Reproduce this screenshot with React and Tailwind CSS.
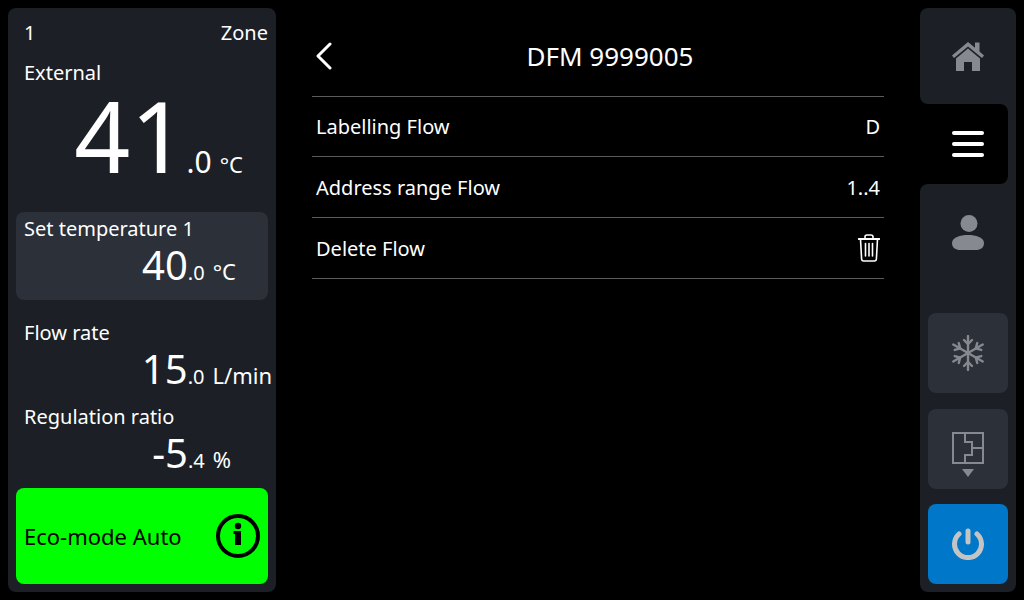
const font = { fontFamily: '"Noto Sans", sans-serif' };

const rows = [
  { label: "Labelling Flow", value: "D", h: "h-[60px]", text: "" },
  { label: "Address range Flow", value: "1..4", h: "h-[61px]", text: "pt-[2px]" },
  { label: "Delete Flow", trash: true, h: "h-[61px]", text: "pt-[2px]" },
];

const HomeIcon = () => (
  <svg width="32" height="30" viewBox="0 0 32 30" fill="#868a90">
    <path d="M0 14.500 16 1l7 5.800V1.500h4.500v9L32 14.500l-2 2.500L16 5.400 2 17z" />
    <path d="M4 17.500 16 7.600l12 9.900V30h-8v-9h-8v9H4z" />
  </svg>
);

const MenuIcon = () => (
  <svg width="32" height="26" viewBox="0 0 32 26" fill="#fff">
    <rect x="0" y="0" width="32" height="4" rx="2" />
    <rect x="0" y="11" width="32" height="4" rx="2" />
    <rect x="0" y="22" width="32" height="4" rx="2" />
  </svg>
);

const UserIcon = () => (
  <svg width="32" height="35" viewBox="0 0 32 35" fill="#868a90">
    <circle cx="17" cy="8.500" r="8.500" />
    <path d="M0 28C0 22.500 8 20 16 20S32 22.500 32 28C32 33 28 35 24 35H8C4 35 0 33 0 28Z" />
  </svg>
);

const SnowIcon = () => (
  <svg width="34" height="36" viewBox="-17 -18 34 36" fill="none" stroke="#868a90" strokeWidth="2.400" strokeLinecap="round">
    {[0, 60, 120].map((deg) => (
      <g key={deg} transform={`rotate(${deg})`}>
        <path d="M0-17V17" />
        <path d="M-4-13 0-9 4-13M-4 13 0 9 4 13" />
      </g>
    ))}
  </svg>
);

const PlanIcon = () => (
  <svg className="mt-[11px]" width="32" height="46" viewBox="0 0 32 46" fill="none" stroke="#868a90" strokeWidth="2">
    <rect x="1" y="1" width="30" height="30" />
    <path d="M13 1V10H20V16H31M20 16V23H13V31" />
    <path d="M10 37H22L16 45Z" fill="#868a90" stroke="none" />
  </svg>
);

const PowerIcon = () => (
  <svg width="32" height="32" viewBox="0 0 32 32" fill="none" stroke="#c4c4c4" strokeWidth="5" strokeLinecap="round">
    <path d="M7 6A13.500 13.500 0 1 0 25 6" />
    <path d="M16 3V14" />
  </svg>
);

const TrashIcon = () => (
  <svg width="22" height="28" viewBox="0 0 22 28" fill="none" stroke="#fff" strokeWidth="1.600" strokeLinecap="round">
    <path d="M0.800 5H21.200" strokeWidth="2" />
    <path d="M7 4.500V2.800C7 1.600 8 1 9 1h4c1 0 2 .6 2 1.800V4.500" />
    <path d="M2.500 5 3.600 25c.1 1.200 1 2 2 2h10.800c1 0 1.900-.8 2-2L19.500 5" />
    <path d="M7.500 9.500V22M11 9.500V22M14.500 9.500V22" />
  </svg>
);

const InfoIcon = () => (
  <svg width="44" height="44" viewBox="0 0 44 44">
    <circle cx="22" cy="22" r="20" fill="none" stroke="#000" strokeWidth="4" />
    <circle cx="22" cy="12" r="3.200" fill="#000" />
    <path d="M17.500 17H25V31H19V20H17.500Z" fill="#000" />
  </svg>
);

const Reading = ({ main, dec, unit, className }) => (
  <div className={`flex items-baseline justify-end text-white ${className}`}>
    <span className="text-[40px] leading-none">{main}</span>
    <span className="text-[20px] leading-none">{dec}</span>
    <span className="ml-2 text-[22px] leading-none">{unit}</span>
  </div>
);

const App = () => {
  return (
    <div className="flex h-[600px] w-[1024px] overflow-hidden bg-black p-2" style={font}>
      {/* left panel */}
      <div className="flex w-[268px] flex-col rounded-lg bg-[#1c2026] p-2 text-[20px] text-white">
        <div className="flex h-[34px] items-center justify-between pl-2 leading-none">
          <span>1</span>
          <span>Zone</span>
        </div>
        <div className="mt-2 h-[30px] pl-2 leading-[30px]">External</div>
        <div className="mt-[2px] flex h-[90px] items-baseline justify-end pr-[25px]">
          <span className="text-[98px] leading-[90px]">41</span>
          <span className="text-[30px] leading-none">.0</span>
          <span className="ml-2 text-[22px] leading-none">°C</span>
        </div>
        <div className="mt-8 h-[88px] rounded-lg bg-[#2b3039] px-2 pt-[2px]">
          <div className="h-[30px] leading-[30px]">Set temperature 1</div>
          <Reading main="40" dec=".0" unit="°C" className="mt-[1px] pr-[24px]" />
        </div>
        <div className="mt-[18px] h-[30px] pl-2 leading-[30px]">Flow rate</div>
        <Reading main="15" dec=".0" unit="L/min" className="mt-[1px] -mr-[4px]" />
        <div className="mt-[13px] h-[30px] pl-2 leading-[30px]">Regulation ratio</div>
        <Reading main="-5" dec=".4" unit="%" className="mt-[1px] pr-[37px]" />
        <div className="mt-auto flex h-[96px] items-center justify-between rounded-lg bg-[#00ff00] pl-2 pr-2 text-black">
          <span className="text-[22px]">Eco-mode Auto</span>
          <InfoIcon />
        </div>
      </div>

      {/* center */}
      <div className="ml-9 flex w-[572px] flex-col text-white">
        <div className="flex h-[89px] items-center border-b border-[#5c5c5c] pt-[6px]">
          <div className="mt-[2px] flex w-6 justify-start pl-[3px]">
            <svg width="18" height="28" viewBox="0 0 18 28" fill="none" stroke="#fff" strokeWidth="3" strokeLinecap="round" strokeLinejoin="round">
              <path d="M15 2 3 14 15 26" />
            </svg>
          </div>
          <div className="mt-[2px] flex-1 text-center text-[26px]">DFM 9999005</div>
        </div>
        {rows.map((row) => (
          <div key={row.label} className={`flex items-center justify-between border-b border-[#5c5c5c] pl-1 pr-1 text-[20px] ${row.h}`}>
            <span className={row.text}>{row.label}</span>
            {row.trash ? <TrashIcon /> : <span className={row.text}>{row.value}</span>}
          </div>
        ))}
      </div>

      {/* right rail */}
      <div className="ml-9 flex w-24 flex-col">
        <div className="flex h-24 items-center justify-center rounded-t-lg rounded-bl-lg bg-[#1c2026]">
          <HomeIcon />
        </div>
        <div className="h-20 bg-[#1c2026]">
          <div className="flex h-20 w-[88px] items-center justify-center rounded-r-lg bg-black pl-2">
            <MenuIcon />
          </div>
        </div>
        <div className="flex flex-1 flex-col items-center rounded-b-lg rounded-tl-lg bg-[#1c2026] px-2 pb-2">
          <div className="flex h-24 items-center justify-center">
            <UserIcon />
          </div>
          <div className="mt-[33px] flex h-20 w-20 items-center justify-center rounded-lg bg-[#2b3039]">
            <SnowIcon />
          </div>
          <div className="mt-4 flex h-20 w-20 items-center justify-center rounded-lg bg-[#2b3039]">
            <PlanIcon />
          </div>
          <div className="mt-[15px] flex h-20 w-20 items-center justify-center rounded-lg bg-[#0077c8]">
            <PowerIcon />
          </div>
        </div>
      </div>
    </div>
  );
};

export default App;
